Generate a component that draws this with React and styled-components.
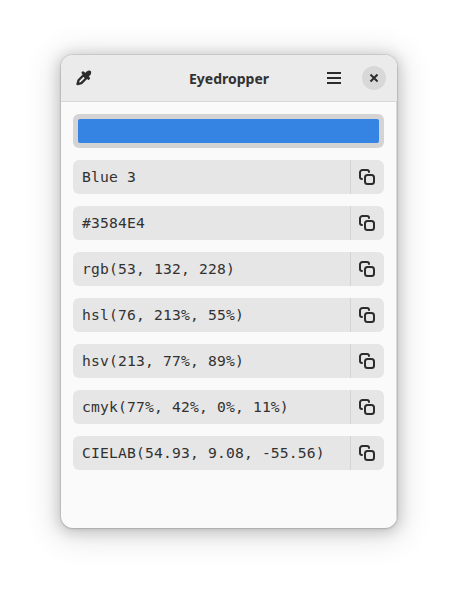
import React from "react";
import styled, { createGlobalStyle } from "styled-components";

const GlobalStyle = createGlobalStyle`
  * { box-sizing: border-box; }
  body { margin: 0; background: #fff; color: #323232; overflow: hidden; }
  button { border: 0; padding: 0; background: none; color: #2c2c2c; }
  svg { display: block; }
`;

const Desktop = styled.main`
  width: 458px;
  height: 595px;
  padding: 55px 61px 0;
`;

const Window = styled.section`
  width: 336px;
  height: 473px;
  display: flex;
  flex-direction: column;
  border-radius: 12px;
  overflow: hidden;
  background: #fafafa;
  box-shadow: 0 0 0 1px rgba(0, 0, 0, 0.07), 0 1px 3px rgba(0, 0, 0, 0.13),
    0 2px 14px 3px rgba(0, 0, 0, 0.17), 0 4px 30px 10px rgba(0, 0, 0, 0.09);
`;

const HeaderBar = styled.header`
  height: 47px;
  flex: none;
  display: grid;
  grid-template-columns: 84px 1fr 84px;
  align-items: center;
  background: #ebebeb;
  border-bottom: 1px solid #d8d8d8;
`;

const Title = styled.h1`
  margin: 0;
  text-align: center;
  font: 700 14px/20px "Noto Sans", sans-serif;
  padding-top: 1px;
`;

const PickButton = styled.button`
  width: 34px;
  height: 34px;
  margin-left: 6px;
  display: grid;
  place-items: center;
`;

const HeaderActions = styled.div`
  display: flex;
  align-items: center;
  gap: 11px;
  justify-content: flex-end;
  padding-right: 11px;
`;

const MenuButton = styled.button`
  width: 34px;
  height: 34px;
  display: grid;
  place-items: center;
`;

const CloseButton = styled.button`
  width: 24px;
  height: 24px;
  display: grid;
  place-items: center;
  border-radius: 50%;
  background: #d8d8d8;
`;

const Content = styled.div`
  flex: 1;
  display: flex;
  flex-direction: column;
  gap: 12px;
  padding: 12px;
  border-right: 1px solid #dadada;
`;

const Swatch = styled.button`
  height: 34px;
  padding: 5px;
  border-radius: 6px;
  background: #d4d4d4;
`;

const SwatchColor = styled.span`
  display: block;
  height: 24px;
  border-radius: 2px;
  background: ${(p) => p.$color};
`;

const FormatRow = styled.div`
  height: 34px;
  display: flex;
  border-radius: 6px;
  background: #e6e6e6;
`;

const FormatValue = styled.span`
  flex: 1;
  padding-left: 9px;
  font: 14.667px/34px "DejaVu Sans Mono", monospace;
  letter-spacing: 0.17px;
  white-space: pre;
`;

const CopyButton = styled.button`
  width: 34px;
  display: flex;
  align-items: center;
  padding-left: 8px;
  border-left: 1px solid #d4d4d4;
`;

const EyedropperIcon = () => (
  <svg width="16" height="16" viewBox="0 0 16 16" fill="currentColor">
    <path d="M8.200 4 10.600 1.500C12 .3 13.900 0 14.700.9s.6 2.900-.6 4.300L11.700 7.500z" />
    <path d="M7 2.800 12.500 8.300" fill="none" stroke="currentColor" strokeWidth="3" strokeLinecap="round" />
    <path d="M7.400 5.300 2.500 10.200 1.500 14.100 5.400 13.100 10.300 8.200z" fill="none" stroke="currentColor" strokeWidth="2.300" strokeLinejoin="round" />
  </svg>
);

const MenuIcon = () => (
  <svg width="16" height="16" viewBox="0 0 16 16" fill="currentColor">
    <path d="M1 2h14v2H1zM1 7h14v2H1zM1 12h14v2H1z" />
  </svg>
);

const CloseIcon = () => (
  <svg width="16" height="16" viewBox="0 0 16 16" fill="none" stroke="currentColor" strokeWidth="2" strokeLinecap="square">
    <path d="M5.200 5.200l5.600 5.600M10.800 5.200l-5.600 5.600" />
  </svg>
);

const CopyIcon = () => (
  <svg width="16" height="16" viewBox="0 0 16 16" fill="none" stroke="currentColor" strokeWidth="2">
    <path d="M3 10a2 2 0 0 1-2-2V3.500A2.500 2.500 0 0 1 3.500 1H8a2 2 0 0 1 2 2" strokeLinecap="round" />
    <rect x="6" y="6" width="9" height="9" rx="2.500" />
  </svg>
);

const formats = [
  "Blue 3",
  "#3584E4",
  "rgb(53, 132, 228)",
  "hsl(76, 213%, 55%)",
  "hsv(213, 77%, 89%)",
  "cmyk(77%, 42%, 0%, 11%)",
  "CIELAB(54.93, 9.08, -55.56)",
];

export default function App() {
  return (
    <Desktop>
      <GlobalStyle />
      <Window>
        <HeaderBar>
          <PickButton aria-label="Pick a color"><EyedropperIcon /></PickButton>
          <Title>Eyedropper</Title>
          <HeaderActions>
            <MenuButton aria-label="Main menu"><MenuIcon /></MenuButton>
            <CloseButton aria-label="Close"><CloseIcon /></CloseButton>
          </HeaderActions>
        </HeaderBar>
        <Content>
          <Swatch aria-label="Current color"><SwatchColor $color="#3584e4" /></Swatch>
          {formats.map((value) => (
            <FormatRow key={value}>
              <FormatValue>{value}</FormatValue>
              <CopyButton aria-label={`Copy ${value}`}><CopyIcon /></CopyButton>
            </FormatRow>
          ))}
        </Content>
      </Window>
    </Desktop>
  );
}
